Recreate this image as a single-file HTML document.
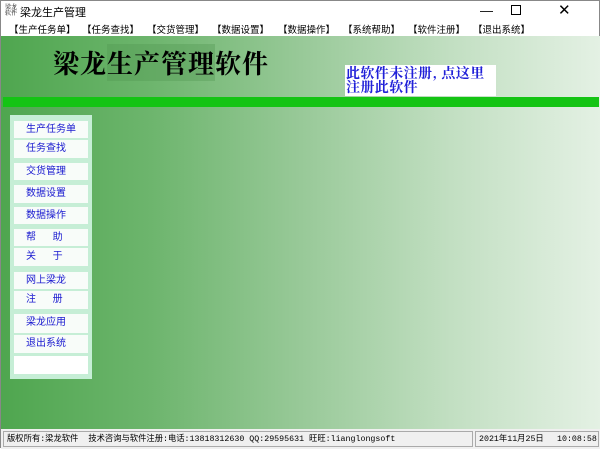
<!DOCTYPE html>
<html><head><meta charset="utf-8"><style>
*{margin:0;padding:0;box-sizing:border-box}
body{width:600px;height:448px;overflow:hidden;background:#fff;font-family:"Liberation Sans","Noto Sans CJK SC",sans-serif;position:relative;border:1px solid #888}
.abs{position:absolute}
.menu span{position:absolute;top:21px;font-size:9.5px;color:#000;white-space:nowrap}
.main{left:0;top:35px;width:600px;height:393px;background:linear-gradient(90deg,#4fa64f 0%,#6db56d 25%,#98c998 50%,#c2dfc2 75%,#e4f1e4 100%)}
.btn{position:absolute;left:13px;width:74px;background:#f8fcf9;font-size:10px;color:#1a1ad0;padding-left:12px;line-height:17px}
.status{left:0;top:428px;width:600px;height:20px;background:#f0f0f0;font-size:8.3px;color:#000;font-family:"Liberation Mono","Noto Sans CJK SC",monospace}
</style></head><body>
<div class="abs" style="left:4px;top:3px;font-size:6px;line-height:6px;font-family:'Noto Serif CJK SC',serif">梁龙<br>软件</div>
<div class="abs" style="left:19px;top:3px;font-size:11px">梁龙生产管理</div>
<div class="abs" style="left:479px;top:2px;font-size:13px">&#8212;</div>
<div class="abs" style="left:510px;top:4px;width:10px;height:10px;border:1px solid #000"></div>
<div class="abs" style="left:557px;top:0px;font-size:15px">✕</div>
<div class="menu">
<span style="left:8px">【生产任务单】</span><span style="left:81px">【任务查找】</span><span style="left:146px">【交货管理】</span><span style="left:211px">【数据设置】</span><span style="left:277px">【数据操作】</span><span style="left:342px">【系统帮助】</span><span style="left:407px">【软件注册】</span><span style="left:472px">【退出系统】</span>
</div>
<div class="abs main"></div>
<div class="abs" style="left:52px;top:43px;font-size:26px;font-weight:bold;letter-spacing:1px;color:#000;font-family:'Noto Serif CJK SC',serif">梁龙<span style="background:rgba(80,150,80,.35)">生产管理</span>软件</div>
<div class="abs" style="left:344px;top:64px;width:151px;height:31px;background:#fff;color:#2020d8;font-weight:bold;font-size:14px;line-height:14px;letter-spacing:0.4px;font-family:'Noto Serif CJK SC',serif;padding-left:1px;padding-top:1px">此软件未注册, 点这里<br>注册此软件</div>
<div class="abs" style="left:2px;top:96px;width:596px;height:10px;background:#14c414"></div>
<div class="abs" style="left:9px;top:114px;width:82px;height:264px;background:#c6eed6"></div>
<div class="btn" style="top:120px;height:17px">生产任务单</div>
<div class="btn" style="top:139px;height:18px">任务查找</div>
<div class="btn" style="top:162px;height:17px">交货管理</div>
<div class="btn" style="top:184px;height:18px">数据设置</div>
<div class="btn" style="top:206px;height:17px">数据操作</div>
<div class="btn" style="top:228px;height:17px">帮&nbsp;&nbsp;&nbsp;&nbsp;&nbsp;&nbsp;助</div>
<div class="btn" style="top:247px;height:18px">关&nbsp;&nbsp;&nbsp;&nbsp;&nbsp;&nbsp;于</div>
<div class="btn" style="top:271px;height:17px">网上梁龙</div>
<div class="btn" style="top:290px;height:18px">注&nbsp;&nbsp;&nbsp;&nbsp;&nbsp;&nbsp;册</div>
<div class="btn" style="top:313px;height:19px">梁龙应用</div>
<div class="btn" style="top:334px;height:18px">退出系统</div>
<div class="btn" style="top:355px;height:18px;background:#fff"></div>
<div class="abs status">
<div class="abs" style="left:2px;top:2px;width:470px;height:16px;border:1px solid #aaa;padding-left:3px;line-height:15px;white-space:nowrap">版权所有:梁龙软件&nbsp;&nbsp;技术咨询与软件注册:电话:13818312630 QQ:29595631 旺旺:lianglongsoft</div>
<div class="abs" style="left:474px;top:2px;width:124px;height:16px;border:1px solid #aaa;padding-left:3px;line-height:15px;white-space:nowrap">2021年11月25日</div>
<div class="abs" style="left:556px;top:3px;line-height:15px;white-space:nowrap">10:08:58</div>
</div>
</body></html>
